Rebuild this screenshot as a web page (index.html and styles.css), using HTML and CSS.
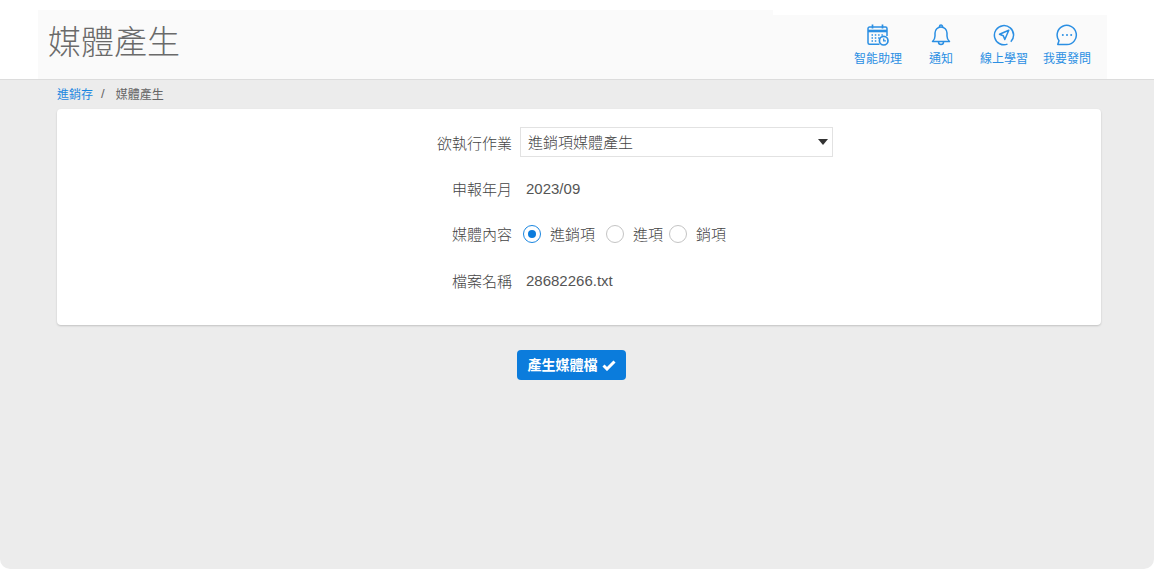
FILE: index.html
```html
<!DOCTYPE html>
<html lang="zh-Hant">
<head>
<meta charset="utf-8">
<title>媒體產生</title>
<link rel="stylesheet" href="styles.css">
</head>
<body>
<header class="header">
  <div class="title-block"><h1 class="title">媒體產生</h1></div>
  <nav class="tools">
    <a class="tool">
      <svg class="tool-icon" viewBox="0 0 22 22" fill="none" stroke="#2b8fe3" stroke-width="1.5"><path d="M12.500 20.200H2.500a1.500 1.500 0 0 1-1.500-1.500V4.500A1.500 1.500 0 0 1 2.500 3h16a1.500 1.500 0 0 1 1.500 1.500V12"/><path d="M1 7h19" stroke-width="2.600"/><path d="M5.500 .5v4M15.500 .5v4" stroke-width="1.700"/><path d="M4.500 11h1.500M7.800 11h1.500M11.100 11h1.500M14.400 11h1.500M4.500 14h1.500M7.800 14h1.500M11.100 14h1.500M4.500 17h1.500M7.800 17h1.500" stroke-width="1.300"/><circle cx="16.700" cy="16.700" r="4.300" stroke-width="1.700"/><path d="M16.700 14.500v2.400h2.200" stroke-width="1.300"/></svg>
      <span class="tool-label">智能助理</span>
    </a>
    <a class="tool">
      <svg class="tool-icon" viewBox="0 0 22 22" fill="none" stroke="#2b8fe3" stroke-width="1.500"><path d="M2.500 17.500c1.500-1.300 2.500-2.500 2.500-5.500V9a6 6 0 0 1 12 0v3c0 3 1 4.200 2.500 5.500z" stroke-linejoin="round"/><path d="M9.500 3.200V2.500a1.500 1.500 0 0 1 3 0v.7"/><path d="M8.500 18a2.500 2.500 0 0 0 5 0"/></svg>
      <span class="tool-label">通知</span>
    </a>
    <a class="tool">
      <svg class="tool-icon" viewBox="0 0 22 22" fill="none" stroke="#2b8fe3" stroke-width="1.500"><path d="M14.500 20.100A9.600 9.600 0 1 1 20.600 11c0 2.500-1 5-2.800 6.800"/><path d="M15.800 6.200 6.500 10.200l3.800 1.500 1.500 3.800z" stroke-linejoin="round"/></svg>
      <span class="tool-label">線上學習</span>
    </a>
    <a class="tool">
      <svg class="tool-icon" viewBox="0 0 22 22" fill="none" stroke="#2b8fe3" stroke-width="1.500"><path d="M1.800 20.300l1.200-3.600A9.600 9.600 0 1 1 11 20.600H1.800z" stroke-linejoin="round"/><circle cx="6.800" cy="11" r="1" fill="#2b8fe3" stroke="none"/><circle cx="11" cy="11" r="1" fill="#2b8fe3" stroke="none"/><circle cx="15.200" cy="11" r="1" fill="#2b8fe3" stroke="none"/></svg>
      <span class="tool-label">我要發問</span>
    </a>
  </nav>
</header>
<main class="main">
  <div class="breadcrumb"><a class="crumb-link">進銷存</a><span class="crumb-sep">/</span><span class="crumb-current">媒體產生</span></div>
  <section class="card">
    <form class="form">
      <div class="row row-select">
        <span class="label">欲執行作業</span>
        <div class="select"><span>進銷項媒體產生</span><i class="caret"></i></div>
      </div>
      <div class="row row-period">
        <span class="label">申報年月</span>
        <span class="value">2023/09</span>
      </div>
      <div class="row row-content">
        <span class="label">媒體內容</span>
        <div class="radios">
          <span class="radio radio-on"></span><span class="radio-text radio-text-wide">進銷項</span>
          <span class="radio"></span><span class="radio-text">進項</span>
          <span class="radio"></span><span class="radio-text">銷項</span>
        </div>
      </div>
      <div class="row row-file">
        <span class="label">檔案名稱</span>
        <span class="value">28682266.txt</span>
      </div>
    </form>
  </section>
  <div class="actions">
    <button class="btn" type="button">產生媒體檔
      <svg class="btn-check" viewBox="0 0 14 11"><path d="M1.500 5.500 5 9l7.500-7.500" fill="none" stroke="#fff" stroke-width="3"/></svg>
    </button>
  </div>
</main>
</body>
</html>
```
FILE: styles.css
```css
* { box-sizing: border-box; }
html, body { height: 100%; }
body {
  margin: 0;
  background: #fff;
  display: flex;
  flex-direction: column;
  font-family: "Liberation Sans", "Noto Sans CJK TC", sans-serif;
  color: #555;
  font-size: 15px;
  font-weight: 300;
  overflow: hidden;
}
.header {
  height: 80px;
  flex: none;
  display: flex;
  align-items: flex-end;
  padding-left: 38px;
  border-bottom: 1px solid #dcdcdc;
}
.title-block {
  width: 735px;
  height: 69px;
  background: #fafafa;
  padding: 10px 0 0 10px;
}
.title {
  margin: 0;
  font-size: 33px;
  font-weight: 300;
  line-height: 46px;
  color: #6a6a6a;
}
.tools {
  width: 334px;
  height: 64px;
  background: #fafafa;
  display: flex;
  padding-left: 73.500px;
}
.tool {
  width: 63px;
  display: flex;
  flex-direction: column;
  align-items: center;
  padding-top: 9px;
  color: #2b8fe3;
}
.tool-icon { width: 22px; height: 22px; display: block; }
.tool-label { font-size: 12px; font-weight: 400; line-height: 18px; margin-top: 4px; white-space: nowrap; }
.main {
  flex: 1;
  background: #ececec;
  border-radius: 0 0 10px 10px;
  padding: 0 53px 0 57px;
}
.breadcrumb {
  height: 29px;
  display: flex;
  align-items: center;
  font-size: 12px;
  font-weight: 400;
  padding-bottom: 2px;
  color: #666;
}
.crumb-link { color: #1a86e0; }
.crumb-sep { margin: 0 11px 0 8px; font-size: 13px; }
.card {
  background: #fff;
  border-radius: 4px;
  box-shadow: 0 1px 2px rgba(0,0,0,.18);
  height: 216px;
  padding-top: 18px;
}
.form { display: flex; flex-direction: column; }
.row {
  display: grid;
  grid-template-columns: 455px 1fr;
  column-gap: 8px;
  align-items: center;
  height: 30px;
}
.row-period { margin-top: 16px; }
.row-content { margin-top: 15px; }
.row-file { margin-top: 17px; }
.label { text-align: right; color: #444; }
.value { padding-left: 6px; color: #555; }
.select {
  width: 313px;
  height: 30px;
  border: 1px solid #e2e2e2;
  display: flex;
  align-items: center;
  justify-content: space-between;
  padding: 0 0 1px 7px;
  color: #444;
}
.caret {
  width: 0; height: 0;
  border-left: 5.500px solid transparent;
  border-right: 5.500px solid transparent;
  border-top: 6.500px solid #333;
  margin-right: 4px;
}
.radios { display: flex; align-items: center; padding-left: 3px; color: #444; }
.radio {
  width: 18px; height: 18px;
  margin-top: 2px;
  border-radius: 50%;
  border: 1px solid #c4c4c4;
  background: #fff;
  flex: none;
  position: relative;
}
.radio-on { border-color: #1a86e0; }
.radio-on::after {
  content: "";
  position: absolute;
  left: 4px; top: 4px;
  width: 8px; height: 8px;
  border-radius: 50%;
  background: #0b7cdc;
}
.radio-text { margin: 0 6px 0 9px; white-space: nowrap; }
.radio-text-wide { margin-right: 11px; }
.actions { display: flex; justify-content: center; padding: 25px 15px 0 0; }
.btn {
  width: 109px;
  height: 30px;
  background: #0b7cdc;
  color: #fff;
  border: none;
  border-radius: 4px;
  font: 700 14px/1 "Liberation Sans", "Noto Sans CJK TC", sans-serif;
  display: flex;
  align-items: center;
  justify-content: center;
  gap: 4px;
  padding: 0;
}
.btn-check { width: 14px; height: 11px; }
```
